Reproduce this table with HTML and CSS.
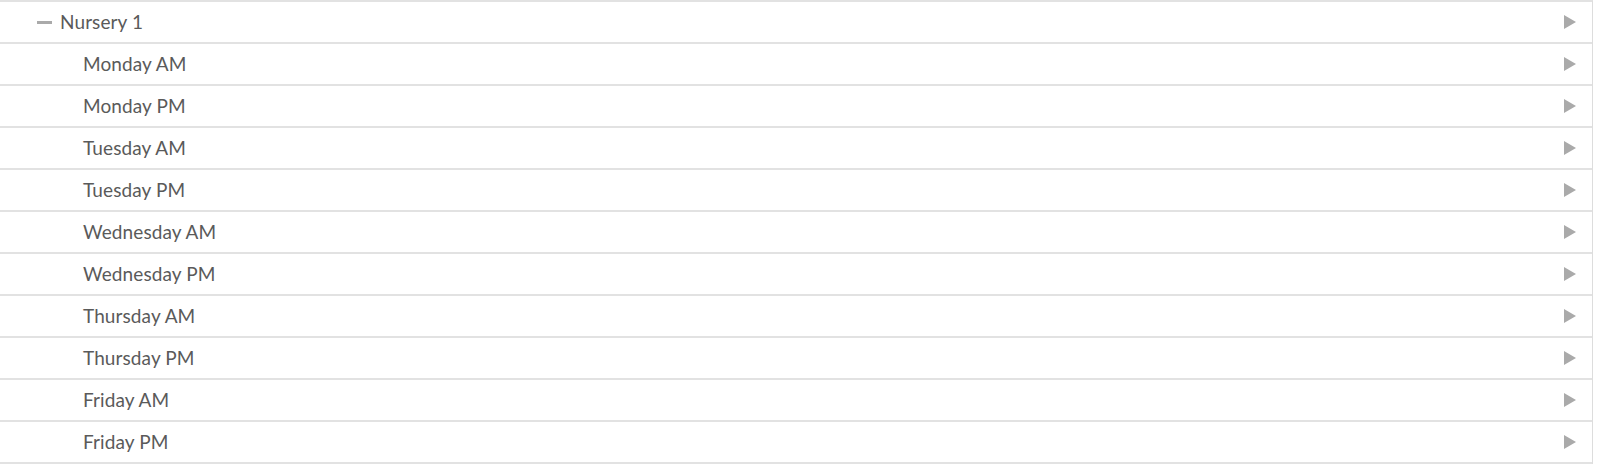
FILE: index.html
```html
<!DOCTYPE html>
<html>
<head>
<meta charset="utf-8">
<link rel="stylesheet" href="styles.css">
</head>
<body>
<ul class="tree">
  <li class="row group"><span class="dash"></span><span class="label">Nursery 1</span><span class="arrow"></span></li>
  <li class="row child"><span class="label">Monday AM</span><span class="arrow"></span></li>
  <li class="row child"><span class="label">Monday PM</span><span class="arrow"></span></li>
  <li class="row child"><span class="label">Tuesday AM</span><span class="arrow"></span></li>
  <li class="row child"><span class="label">Tuesday PM</span><span class="arrow"></span></li>
  <li class="row child"><span class="label">Wednesday AM</span><span class="arrow"></span></li>
  <li class="row child"><span class="label">Wednesday PM</span><span class="arrow"></span></li>
  <li class="row child"><span class="label">Thursday AM</span><span class="arrow"></span></li>
  <li class="row child"><span class="label">Thursday PM</span><span class="arrow"></span></li>
  <li class="row child"><span class="label">Friday AM</span><span class="arrow"></span></li>
  <li class="row child"><span class="label">Friday PM</span><span class="arrow"></span></li>
</ul>
</body>
</html>
```
FILE: styles.css
```css
html, body {
  margin: 0;
  padding: 0;
  background: #fff;
}
body {
  font-family: Lato, "Liberation Sans", sans-serif;
  color: #5a5a5a;
}
.tree {
  list-style: none;
  margin: 0;
  padding: 0;
  width: 1592px;
  border-right: 1px solid #ddd;
  border-top: 2px solid #e2e2e2;
}
.row {
  display: flex;
  align-items: center;
  height: 40px;
  border-bottom: 2px solid #e2e2e2;
  font-size: 19px;
  letter-spacing: 0.1px;
}
.group {
  padding-left: 37px;
}
.child {
  padding-left: 83px;
}
.dash {
  width: 15px;
  height: 3px;
  background: #aaa;
  margin-right: 8px;
}
.label {
  flex: 1;
  padding-bottom: 1px;
}
.arrow {
  width: 0;
  height: 0;
  border-top: 7px solid transparent;
  border-bottom: 7px solid transparent;
  border-left: 12px solid #aaa;
  margin-right: 16px;
}
```
